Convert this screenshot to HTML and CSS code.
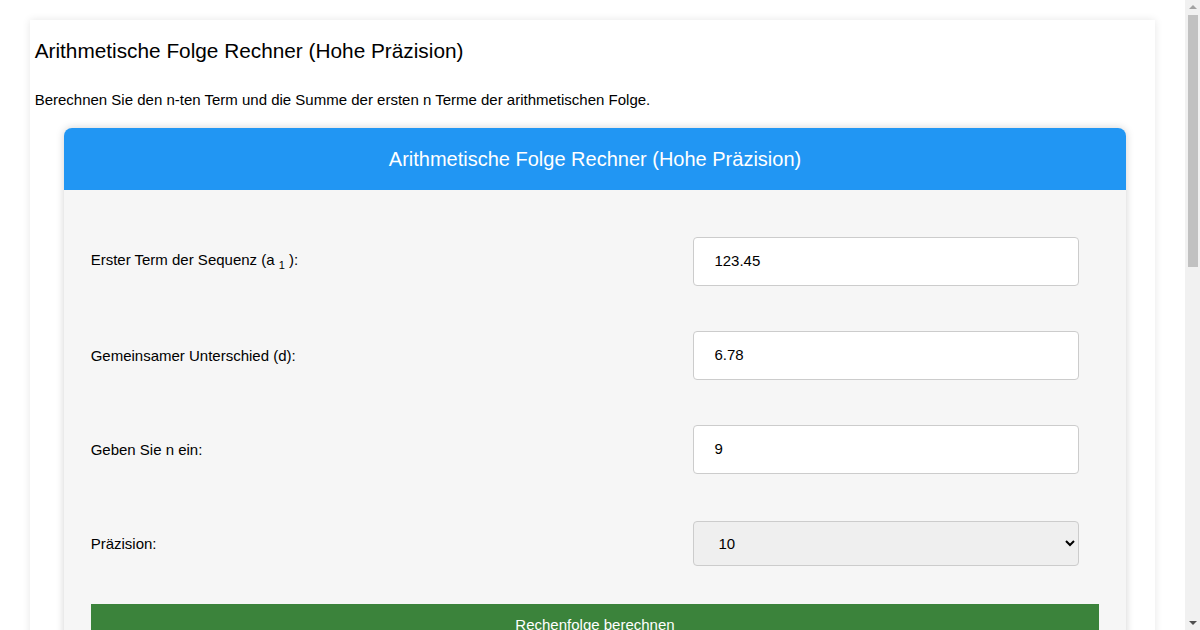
FILE: index.html
```html
<!DOCTYPE html>
<html lang="de">
<head>
<meta charset="utf-8">
<title>Arithmetische Folge Rechner</title>
<link rel="stylesheet" href="styles.css">
</head>
<body>
<div class="page">
  <h1 class="title">Arithmetische Folge Rechner (Hohe Präzision)</h1>
  <p class="intro">Berechnen Sie den n-ten Term und die Summe der ersten n Terme der arithmetischen Folge.</p>
  <div class="card">
    <div class="card-head">Arithmetische Folge Rechner (Hohe Präzision)</div>
    <div class="card-body">
      <div class="row">
        <label class="label">Erster Term der Sequenz (a <sub>1</sub> ):</label>
        <input class="field" type="text" value="123.45">
      </div>
      <div class="row">
        <label class="label">Gemeinsamer Unterschied (d):</label>
        <input class="field" type="text" value="6.78">
      </div>
      <div class="row">
        <label class="label">Geben Sie n ein:</label>
        <input class="field" type="text" value="9">
      </div>
      <div class="row">
        <label class="label">Präzision:</label>
        <select class="field select"><option>10</option></select>
      </div>
      <button class="btn">Rechenfolge berechnen</button>
      <div class="spacer"></div>
    </div>
  </div>
</div>
<div class="scrollbar" aria-hidden="true">
  <span class="sb-arrow sb-up"></span>
  <span class="sb-thumb"></span>
  <span class="sb-arrow sb-down"></span>
</div>
</body>
</html>
```
FILE: styles.css
```css
html, body {
  margin: 0;
  padding: 0;
  background: #ffffff;
  font-family: "Liberation Sans", Arial, sans-serif;
  color: #000;
}
body {
  padding-right: 15px;
}
.page {
  width: 95%;
  margin: 20px auto;
  padding: 5px 5px 30px;
  box-sizing: border-box;
  background: #fff;
  box-shadow: 0 0 8px rgba(0,0,0,0.1);
}
.title {
  font-size: 20.8px;
  font-weight: normal;
  margin: 14px 0 0;
  line-height: 24px;
}
.intro {
  font-size: 15px;
  margin: 28px 0 0;
  line-height: 18px;
}
.card {
  margin: 19px 24px 0 29px;
  border-radius: 8px;
  overflow: hidden;
  background: #f6f6f6;
  box-shadow: 0 0 8px rgba(0,0,0,0.18);
}
.card-head {
  background: #2196f3;
  color: #fff;
  text-align: center;
  font-size: 20px;
  height: 62px;
  line-height: 62px;
}
.card-body {
  padding: 24px 27px 20px;
}
.row {
  display: flex;
  align-items: center;
  justify-content: space-between;
  height: 94px;
}
.label {
  font-size: 15px;
}
.label sub {
  font-size: 11px;
}
.field {
  width: 386px;
  height: 49px;
  margin-right: 20px;
  box-sizing: border-box;
  border: 1px solid #ccc;
  border-radius: 4px;
  background: #fff;
  padding: 0 20px 1px;
  font-family: "Liberation Sans", Arial, sans-serif;
  font-size: 15px;
  color: #000;
}
.select {
  height: 45px;
  background: #efefef;
  padding: 0 16px 0 20px;
}
.btn {
  display: block;
  width: 100%;
  margin-top: 14px;
  height: 40px;
  border: none;
  background: #3b833b;
  color: #fff;
  font-family: "Liberation Sans", Arial, sans-serif;
  font-size: 15px;
}
.spacer {
  height: 200px;
}
.scrollbar {
  position: fixed;
  top: 0;
  right: 0;
  bottom: 0;
  width: 15px;
  background: #f1f1f1;
  display: flex;
  flex-direction: column;
  align-items: center;
}
.sb-arrow {
  width: 0;
  height: 0;
  border-left: 4px solid transparent;
  border-right: 4px solid transparent;
}
.sb-up {
  margin-top: 5px;
  border-bottom: 4px solid #a3a3a3;
}
.sb-down {
  margin-top: auto;
  margin-bottom: 5px;
  border-top: 4px solid #505050;
}
.sb-thumb {
  width: 10px;
  height: 252px;
  margin-top: 6px;
  margin-left: 1px;
  background: #c1c1c1;
}
```
